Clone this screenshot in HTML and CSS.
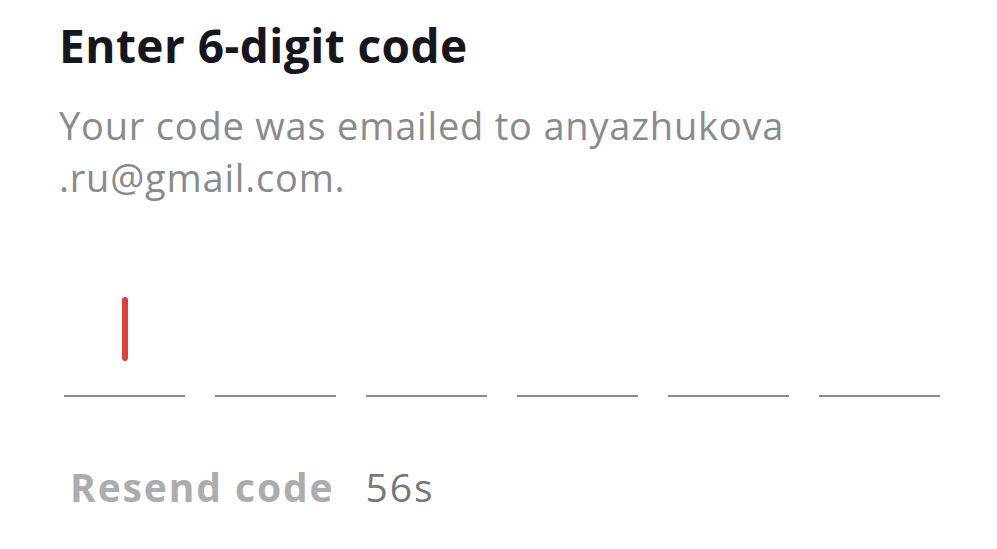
FILE: index.html
```html
<!DOCTYPE html>
<html lang="en">
<head>
<meta charset="utf-8">
<title>Enter 6-digit code</title>
<link rel="stylesheet" href="styles.css">
</head>
<body>
<main class="page">
  <h1 class="title">Enter 6-digit code</h1>
  <p class="subtitle">Your code was emailed to anyazhukova<br>.ru@gmail.com.</p>
  <div class="code">
    <div class="cell active"><span class="cursor"></span></div>
    <div class="cell"></div>
    <div class="cell"></div>
    <div class="cell"></div>
    <div class="cell"></div>
    <div class="cell"></div>
  </div>
  <div class="resend">
    <span class="resend-label">Resend code</span>
    <span class="timer">56s</span>
  </div>
</main>
</body>
</html>
```

FILE: styles.css
```css
html, body {
  margin: 0;
  padding: 0;
  background: #ffffff;
}
.page {
  font-family: "Open Sans", "Lato", sans-serif;
  padding: 17px 57px 0 59px;
  width: 881px;
}
.title {
  margin: 0;
  font-size: 46px;
  font-weight: 700;
  color: #16161e;
  line-height: 56px;
  letter-spacing: 0.45px;
}
.subtitle {
  margin: 26px 0 0;
  font-size: 38px;
  line-height: 52px;
  color: #8a8a8e;
  font-weight: 400;
  letter-spacing: 0.8px;
}
.code {
  display: flex;
  gap: 30px;
  margin: 94px 0 0 5px;
}
.cell {
  width: 121px;
  height: 98px;
  border-bottom: 2px solid #8c8c8c;
  display: flex;
  justify-content: center;
  align-items: flex-start;
}
.cursor {
  display: block;
  width: 6px;
  height: 64px;
  background: #d9423a;
  border-radius: 3px;
}
.resend {
  margin: 66px 0 0 11px;
  display: flex;
  gap: 31px;
  align-items: baseline;
  font-size: 39px;
  line-height: 48px;
  letter-spacing: 1.9px;
}
.resend-label {
  font-weight: 700;
  color: #acacb0;
}
.timer {
  font-weight: 400;
  color: #77777b;
}
```
